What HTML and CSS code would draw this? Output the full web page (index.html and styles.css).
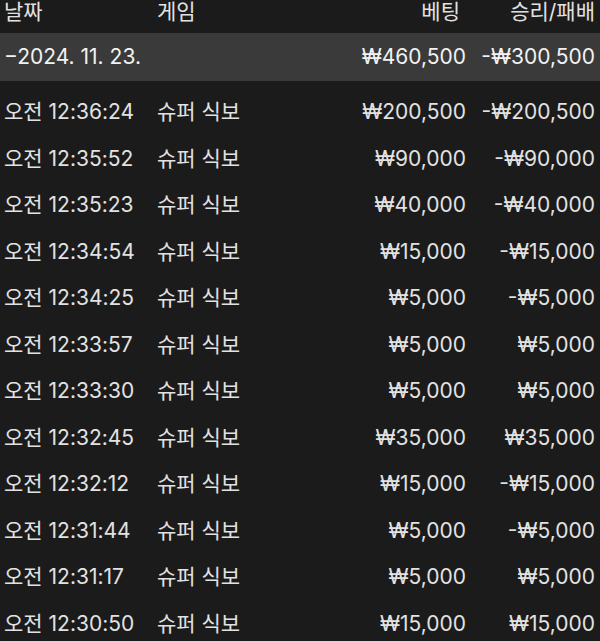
FILE: index.html
```html
<!DOCTYPE html>
<html lang="ko">
<head>
<meta charset="utf-8">
<link rel="stylesheet" href="styles.css">
</head>
<body>
<div class="table">
  <div class="row head">
    <div class="c-date">날짜</div>
    <div class="c-game">게임</div>
    <div class="c-bet">베팅</div>
    <div class="c-win">승리/패배</div>
  </div>
  <div class="row total">
    <div class="c-date">−2024. 11. 23.</div>
    <div class="c-game"></div>
    <div class="c-bet">₩460,500</div>
    <div class="c-win">-₩300,500</div>
  </div>
  <div class="body">
    <div class="row item"><div class="c-date">오전 12:36:24</div><div class="c-game">슈퍼 식보</div><div class="c-bet">₩200,500</div><div class="c-win">-₩200,500</div></div>
    <div class="row item"><div class="c-date">오전 12:35:52</div><div class="c-game">슈퍼 식보</div><div class="c-bet">₩90,000</div><div class="c-win">-₩90,000</div></div>
    <div class="row item"><div class="c-date">오전 12:35:23</div><div class="c-game">슈퍼 식보</div><div class="c-bet">₩40,000</div><div class="c-win">-₩40,000</div></div>
    <div class="row item"><div class="c-date">오전 12:34:54</div><div class="c-game">슈퍼 식보</div><div class="c-bet">₩15,000</div><div class="c-win">-₩15,000</div></div>
    <div class="row item"><div class="c-date">오전 12:34:25</div><div class="c-game">슈퍼 식보</div><div class="c-bet">₩5,000</div><div class="c-win">-₩5,000</div></div>
    <div class="row item"><div class="c-date">오전 12:33:57</div><div class="c-game">슈퍼 식보</div><div class="c-bet">₩5,000</div><div class="c-win">₩5,000</div></div>
    <div class="row item"><div class="c-date">오전 12:33:30</div><div class="c-game">슈퍼 식보</div><div class="c-bet">₩5,000</div><div class="c-win">₩5,000</div></div>
    <div class="row item"><div class="c-date">오전 12:32:45</div><div class="c-game">슈퍼 식보</div><div class="c-bet">₩35,000</div><div class="c-win">₩35,000</div></div>
    <div class="row item"><div class="c-date">오전 12:32:12</div><div class="c-game">슈퍼 식보</div><div class="c-bet">₩15,000</div><div class="c-win">-₩15,000</div></div>
    <div class="row item"><div class="c-date">오전 12:31:44</div><div class="c-game">슈퍼 식보</div><div class="c-bet">₩5,000</div><div class="c-win">-₩5,000</div></div>
    <div class="row item"><div class="c-date">오전 12:31:17</div><div class="c-game">슈퍼 식보</div><div class="c-bet">₩5,000</div><div class="c-win">₩5,000</div></div>
    <div class="row item"><div class="c-date">오전 12:30:50</div><div class="c-game">슈퍼 식보</div><div class="c-bet">₩15,000</div><div class="c-win">₩15,000</div></div>
  </div>
</div>
</body>
</html>
```
FILE: styles.css
```css
html, body {
  margin: 0;
  padding: 0;
  background: #1b1b1b;
  height: 100%;
  overflow: hidden;
}
body {
  font-family: "Inter", "Noto Sans CJK KR", sans-serif;
  font-size: 21px;
  color: #e2e2e2;
}
.table {
  display: flex;
  flex-direction: column;
}
.row {
  display: grid;
  grid-template-columns: 153px 1fr auto 129px;
  align-items: center;
  padding: 0 5px 0 4px;
  white-space: nowrap;
}
.c-bet, .c-win {
  text-align: right;
}
.head {
  height: 33px;
  align-items: start;
  line-height: 24px;
}
.head .c-bet {
  padding-right: 6px;
}
.total {
  height: 48px;
  background: #3a3a3a;
  color: #f2f2f2;
  line-height: 48px;
}
.body {
  display: flex;
  flex-direction: column;
  padding-top: 8px;
}
.item {
  height: 46.5px;
  line-height: 46.5px;
}
```
